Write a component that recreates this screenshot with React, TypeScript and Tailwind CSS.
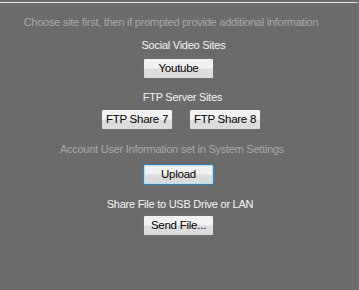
import React from 'react';

const Btn: React.FC<{label: string, focused?: boolean, w?: string}> = ({label, focused, w}) => (
	<button
		type="button"
		className={
			(focused
				? 'border-[#3c7fb1] shadow-[inset_0_0_0_1px_#aee2fa] '
				: 'border-[#707070] ') +
			(w ? w : 'w-[71px]') +
			' h-[21px] rounded-[2px] border bg-gradient-to-b from-[#f2f2f2] from-45% to-[#dcdcdc] to-55% text-[11.5px] leading-none text-black'
		}
	>
		{label}
	</button>
);

export default function App() {
	return (
		<div
			className="h-[290px] w-[359px] overflow-hidden bg-[#6b6b6b] pt-[2px] text-[11px] leading-[13px] tracking-[-0.25px]"
			style={{fontFamily: '"Liberation Sans", Arial, sans-serif'}}
		>
			<div className="h-full w-[358px] border-t border-r border-t-[#e4e4e4] border-r-[#727272]">
				<div className="flex flex-col">
					<div className="mt-[13px] flex justify-center pr-[15px] text-[#a9a9a9]">
						Choose site first, then if prompted provide additional information
					</div>
					<div className="mt-[10px] flex justify-center pl-[10px] text-[#f4f4f4]">
						Social Video Sites
					</div>
					<div className="mt-[6px] flex justify-center">
						<Btn label="Youtube" />
					</div>
					<div className="mt-[12px] flex justify-center pl-[8px] text-[#f4f4f4]">
						FTP Server Sites
					</div>
					<div className="mt-[5px] flex justify-center gap-[16px] pl-[5px]">
						<Btn label="FTP Share 7" w="w-[72px]" />
						<Btn label="FTP Share 8" w="w-[72px]" />
					</div>
					<div className="mt-[13px] flex justify-center pr-[13px] text-[#a9a9a9]">
						Account User Information set in System Settings
					</div>
					<div className="mt-[8px] flex justify-center">
						<Btn label="Upload" focused />
					</div>
					<div className="mt-[13px] flex justify-center pl-[3px] text-[#f4f4f4]">
						Share File to USB Drive or LAN
					</div>
					<div className="mt-[4px] flex justify-center">
						<Btn label="Send File..." />
					</div>
				</div>
			</div>
		</div>
	);
}
